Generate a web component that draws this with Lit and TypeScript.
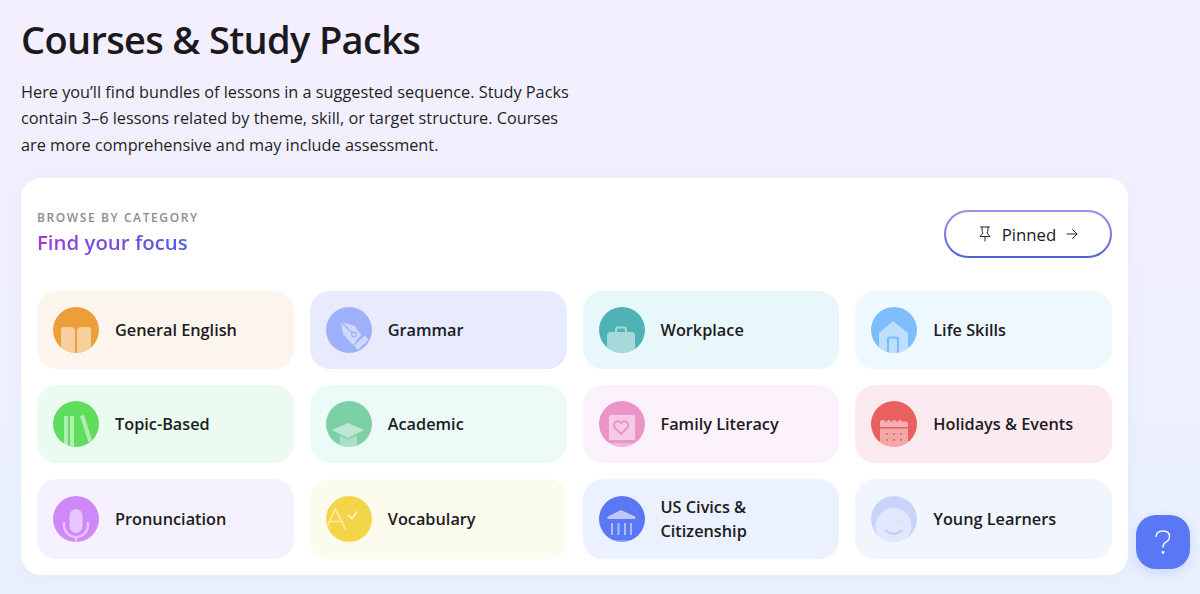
import { LitElement, html, css, svg } from "lit";
import { customElement } from "lit/decorators.js";
import { styleMap } from "lit/directives/style-map.js";

const L = "rgba(255,255,255,.5)";

const icons: Record<string, (c: string) => unknown> = {
  book: (c) => svg`<path d="M8 45V23q0-3 3-3h6q5 0 5 4v22zM24 46V24q0-4 5-4h6q3 0 3 3v22z" fill=${L}/>`,
  pen: (c) => svg`<path d="M15 15 29 19 35 28 27 38 17 27z" fill=${L} stroke-linejoin="round"/><path d="M15 15 26.500 26" stroke=${c} stroke-width="1.200"/><circle cx="28" cy="27.500" r="2.400" fill="none" stroke=${c} stroke-width="1.200"/><path d="M28 38.500 39 28.500 42.500 33 32 43z" fill=${L}/>`,
  case: () => svg`<rect x="8" y="25" width="28" height="24" rx="4" fill=${L}/><path d="M17 25v-2.500q0-2 2-2h6q2 0 2 2V25" fill="none" stroke=${L} stroke-width="2"/>`,
  house: (c) => svg`<path d="M22 14 37 26V46H8V26z" stroke-linejoin="round" fill=${L}/><path d="M17 46V32q0-1.500 1.500-1.500h7Q27 30.500 27 32V46" fill="none" stroke=${c} stroke-width="2.200"/>`,
  books: () => svg`<path d="M11 15h4v31h-4zM17 15h4v31h-4zM27 15l4-1 8 25-3.500 2.500z" fill=${L}/>`,
  cap: () => svg`<path d="M22 22 38 29 22 37 6 29z" fill=${L}/><path d="M14 34.500 22 38.500 31 34.500V46H14z" fill="rgba(255,255,255,.35)"/>`,
  family: (c) => svg`<rect x="10" y="14" width="26" height="25" rx="1" fill=${L}/><path d="M22 33 16 27q-2.400-2.800-.3-5.500 3.200-2.700 6.300.5 3.100-3.200 6.300-.5 2.100 2.700-.3 5.500z" fill="none" stroke=${c} stroke-width="1.800" stroke-linejoin="round"/><rect x="10" y="42" width="26" height="4" fill="rgba(255,255,255,.3)"/>`,
  cal: (c) => svg`<path d="M9 21q0-2 2-2h2.500v1.500h3V19h2.500v1.500h3V19h2.500v1.500h3V19h2.500v1.500H35q2 0 2 2V26H9z" fill="rgba(255,255,255,.5)"/><path d="M9 27.500h28V46H9z" fill="rgba(255,255,255,.45)"/><g fill=${c}><circle cx="16" cy="33" r="1"/><circle cx="23" cy="33" r="1"/><circle cx="30" cy="33" r="1"/><circle cx="16" cy="39" r="1"/><circle cx="23" cy="39" r="1"/><circle cx="30" cy="39" r="1"/></g>`,
  mic: () => svg`<rect x="16.500" y="13" width="13" height="24" rx="6.500" fill=${L}/><path d="M11 26v3a12 12 0 0 0 24 0v-3M23 41v5" fill="none" stroke=${L} stroke-width="2.400"/>`,
  vocab: () => svg`<path d="M.5 32 9 13 20 34M3 25.500H17" fill="none" stroke="rgba(255,255,255,.5)" stroke-width="1.700"/><path d="M22 19 26 22.500 31 15.500" fill="none" stroke="rgba(255,255,255,.7)" stroke-width="1.800"/>`,
  civics: () => svg`<path d="M22 14 36 20.500q1.500 1.500 0 2.500H9q-1.500-1-0-2.500z" fill="rgba(255,255,255,.6)"/><path d="M13 27v12M19.500 27v12M26 27v12M32 27v12" stroke="rgba(255,255,255,.5)" stroke-width="2"/><rect x="8" y="44" width="30" height="2" fill="rgba(255,255,255,.25)"/>`,
  face: () => svg`<circle cx="22.500" cy="30" r="18" fill="rgba(255,255,255,.45)"/><circle cx="17" cy="26" r=".9" fill="#c8d4fa"/><circle cx="28" cy="26" r=".9" fill="#c8d4fa"/><path d="M14.500 34.500q8 6.500 16.500 0" fill="none" stroke="#bccbfa" stroke-width="1.800" stroke-linecap="round"/>`,
};

const cats = [
  { t: "General English", i: "book", c: "#ec9e3a", b: "#fcf5ee" },
  { t: "Grammar", i: "pen", c: "#9fb0fb", b: "#e8ebfd" },
  { t: "Workplace", i: "case", c: "#4fb3b5", b: "#e8f7fa" },
  { t: "Life Skills", i: "house", c: "#7dbcfd", b: "#eef8ff" },
  { t: "Topic-Based", i: "books", c: "#60dc5e", b: "#ebfbf0" },
  { t: "Academic", i: "cap", c: "#7dd0a6", b: "#ecfbf7" },
  { t: "Family Literacy", i: "family", c: "#ea94c8", b: "#fcf2fc" },
  { t: "Holidays & Events", i: "cal", c: "#e96060", b: "#fbebf1" },
  { t: "Pronunciation", i: "mic", c: "#ce88f8", b: "#f6f1fe" },
  { t: "Vocabulary", i: "vocab", c: "#f5d548", b: "#fbfbee" },
  { t: "US Civics & Citizenship", i: "civics", c: "#5a78f5", b: "#ebf1fe" },
  { t: "Young Learners", i: "face", c: "#c8d4fa", b: "#f1f5fe" },
];

@customElement("app-root")
export class AppRoot extends LitElement {
  static styles = css`
    :host {
      display: block;
      position: relative;
      height: 594px;
      overflow: hidden;
      box-sizing: border-box;
      padding: 13px 72px 0 21px;
      font-family: "Open Sans", "Noto Sans", sans-serif;
      color: #1a1a1e;
      background: linear-gradient(180deg, #f4effe 0%, #e9f0fd 100%);
    }
    h1 {
      margin: 0;
      font-size: 38px;
      line-height: 52px;
      font-weight: 600;
      letter-spacing: -0.66px;
    }
    .intro {
      margin: 14px 0 0;
      width: 552px;
      font-size: 16.3px;
      line-height: 26.4px;
      color: #1f1f24;
    }
    .card {
      margin-top: 20px;
      padding: 32px 16px 16px;
      background: #fff;
      border-radius: 20px;
      box-shadow: 0 4px 16px rgba(110, 120, 220, 0.05);
    }
    .head {
      display: flex;
      justify-content: space-between;
      align-items: flex-start;
      margin-bottom: 33px;
    }
    .eyebrow {
      font-size: 12px;
      line-height: 16px;
      letter-spacing: 1.6px;
      font-weight: 600;
      color: #8a8c90;
    }
    .focus {
      font-size: 20.4px;
      line-height: 28px;
      font-weight: 600;
      margin-top: 2px;
      display: inline-block;
      background: linear-gradient(90deg, #a03ae4, #4a60dc);
      -webkit-background-clip: text;
      background-clip: text;
      color: transparent;
    }
    .pinned {
      box-sizing: border-box;
      width: 168px;
      height: 48px;
      display: flex;
      align-items: center;
      justify-content: center;
      gap: 10px;
      border: 2px solid transparent;
      border-radius: 24px;
      background: linear-gradient(#fff, #fff) padding-box,
        linear-gradient(180deg, #a88ce8, #4a64d6) border-box;
      font-size: 16.8px;
      font-weight: 500;
      color: #1a1a1e;
    }
    .pinned svg {
      display: block;
      flex: none;
    }
    .grid {
      display: grid;
      grid-template-columns: repeat(4, 1fr);
      gap: 16px;
    }
    .tile {
      display: flex;
      align-items: center;
      gap: 16px;
      padding: 16px;
      border-radius: 20px;
      font-size: 16.3px;
      line-height: 24px;
      font-weight: 600;
      color: #1c1c22;
    }
    .tile svg {
      flex: none;
      display: block;
      width: 46px;
      height: 46px;
    }
    .help {
      position: absolute;
      left: 1136px;
      top: 515px;
      width: 54px;
      height: 54px;
      border-radius: 20px;
      background: #5a78f5;
      box-shadow: 0 4px 12px rgba(90, 120, 245, 0.2);
      display: flex;
      align-items: center;
      justify-content: center;
    }
  `;

  render() {
    return html`
      <h1>Courses &amp; Study Packs</h1>
      <p class="intro">
        Here you’ll find bundles of lessons in a suggested sequence. Study Packs
        contain 3–6 lessons related by theme, skill, or target structure. Courses
        are more comprehensive and may include assessment.
      </p>
      <section class="card">
        <div class="head">
          <div>
            <div class="eyebrow">BROWSE BY CATEGORY</div>
            <div class="focus">Find your focus</div>
          </div>
          <div class="pinned">
            <svg width="14" height="16" viewBox="0 0 14 16" fill="none" stroke="#2a2a30" stroke-width="1" stroke-linejoin="round" stroke-linecap="round">
              <path d="M2.500 1h9M4 1v2q0 2.500 1 4L2 10.500h10L9 7q1-1.500 1-4V1M7 10.500V15" />
            </svg>
            <span>Pinned</span>
            <svg width="12" height="12" viewBox="0 0 12 12" fill="none" stroke="#2a2a30" stroke-width="1" stroke-linecap="round" stroke-linejoin="round">
              <path d="M1 6h10M6.500 1.500 11 6l-4.500 4.500" />
            </svg>
          </div>
        </div>
        <div class="grid">
          ${cats.map(
            (x, n) => html`
              <div class="tile" style=${styleMap({ background: x.b })}>
                <svg viewBox="0 0 46 46">
                  <defs><clipPath id="c${n}"><circle cx="23" cy="23" r="23" /></clipPath></defs>
                  <g clip-path="url(#c${n})">
                    <rect width="46" height="46" fill=${x.c} />
                    ${icons[x.i](x.c)}
                  </g>
                </svg>
                <span>${x.t}</span>
              </div>
            `
          )}
        </div>
      </section>
      <div class="help">
        <svg width="20" height="26" viewBox="0 0 20 26" fill="none" stroke="#fff" stroke-width="1.400" stroke-linecap="round">
          <path d="M3 7.500Q3.500 2 10 2q6.500 0 6.500 5.500 0 3.500-3.500 5.500-3 1.800-3 5" />
          <circle cx="10" cy="23.500" r=".7" fill="#fff" />
        </svg>
      </div>
    `;
  }
}
